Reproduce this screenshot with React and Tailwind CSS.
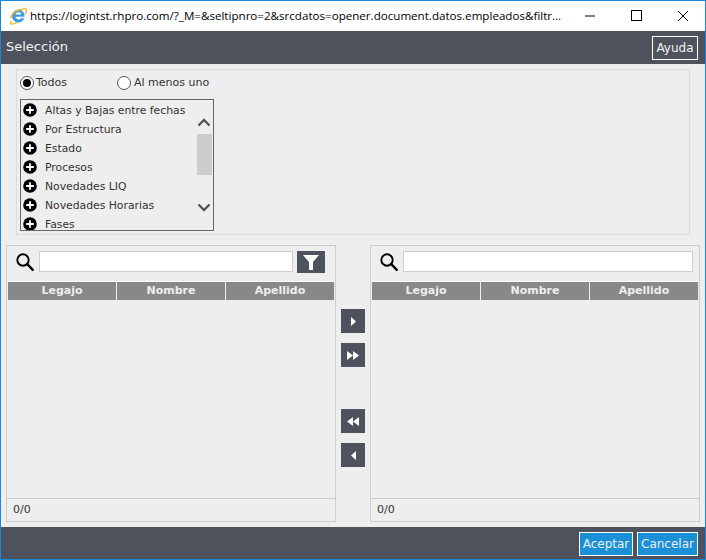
const FONT = "font-['DejaVu_Sans',sans-serif]";

const items = [
  "Altas y Bajas entre fechas",
  "Por Estructura",
  "Estado",
  "Procesos",
  "Novedades LIQ",
  "Novedades Horarias",
  "Fases",
];

const PlusIcon = () => (
  <svg width="14" height="14" viewBox="0 0 14 14" className="mb-[2px] shrink-0">
    <circle cx="7" cy="7" r="6.8" fill="#000" />
    <path d="M7 3.2v7.6M3.2 7h7.6" stroke="#fff" strokeWidth="1.8" />
  </svg>
);

const SearchIcon = () => (
  <svg width="20" height="20" viewBox="0 0 20 20" className="shrink-0">
    <circle cx="8" cy="8" r="5.7" fill="none" stroke="#000" strokeWidth="1.9" />
    <path d="M12.2 12.2l5.6 5.6" stroke="#000" strokeWidth="2.4" strokeLinecap="round" />
  </svg>
);

const IeLogo = () => (
  <svg width="18" height="18" viewBox="0 0 18 18" className="shrink-0">
    <path d="M9.4 2.6a6.4 6.4 0 1 0 6 8.6h-3.2a3.2 3.2 0 0 1-5.7-1.4h9.1A6.5 6.5 0 0 0 9.4 2.6zM6.6 7.5a3 3 0 0 1 5.8 0z" fill="#3a9ee0" />
    <path d="M2.4 14C-.5 18 4.5 18 8.5 15M13.5 2.2c4.5-2 4.6 1.4 2.8 4.6M1.2 11C3 6.5 8.5 2.2 13.5 2.2" fill="none" stroke="#eeb42a" strokeWidth="1.4" />
  </svg>
);

const Triangle = ({ dir, width }) => (
  <svg width={width} height="9" viewBox="0 0 6 9" preserveAspectRatio="none">
    <path d={dir === "right" ? "M0 0l6 4.5-6 4.5z" : "M6 0L0 4.5 6 9z"} fill="#fff" />
  </svg>
);

const ArrowButton = ({ dir, count, className = "" }) => (
  <button className={`flex h-6 w-6 items-center justify-center bg-[#4e525c] ${className}`}>
    {count === 2 && <Triangle dir={dir} width={6} />}
    <Triangle dir={dir} width={count === 2 ? 6 : 5} />
  </button>
);

const ListPanel = ({ withFilter }) => (
  <div className="flex w-[330px] flex-col border border-[#cdcdcd]">
    <div className={`flex h-[35px] items-center pb-[4px] pl-[8px] ${withFilter ? "pr-[10px]" : "pr-[6px]"}`}>
      <SearchIcon />
      <div className="ml-[4px] h-[21px] flex-1 border border-[#cdcdcd] bg-white" />
      {withFilter && (
        <button className="ml-[4px] mt-[1px] flex h-[22px] w-[28px] items-center justify-center bg-[#4e525c]">
          <svg width="16" height="15" viewBox="0 0 16 15">
            <path d="M0 0h16l-6 7v8H6V7z" fill="#fff" />
          </svg>
        </button>
      )}
    </div>
    <div className="mx-[1px] grid h-[19px] grid-cols-3 gap-px border-y border-white">
      {["Legajo", "Nombre", "Apellido"].map((h) => (
        <div key={h} className="flex items-center justify-center bg-[#888] pt-[1px] text-[11px] font-bold text-[#eee]">
          {h}
        </div>
      ))}
    </div>
    <div className="flex-1" />
    <div className="flex h-[23px] items-center border-t border-[#cdcdcd] pl-[6px] pt-[1px] text-[11px] text-[#333]">0/0</div>
  </div>
);

export default function App() {
  return (
    <div className={`flex h-[560px] w-[706px] flex-col overflow-hidden border border-[#1a86d9] bg-[#eee] ${FONT}`}>
      {/* barra de la ventana */}
      <div className="flex h-[30px] items-center bg-white pl-[8px] font-['Open_Sans',sans-serif] text-[11.6px] text-black">
        <IeLogo />
        <span className="ml-[3px] w-[535px] whitespace-nowrap">
          https://logintst.rhpro.com/?_M=&seltipnro=2&srcdatos=opener.document.datos.empleados&filtr...
        </span>
        <div className="ml-auto flex items-center">
          <svg width="12" height="12" viewBox="0 0 12 12" className="mr-[35px]">
            <path d="M1 6h10" stroke="#000" />
          </svg>
          <svg width="12" height="12" viewBox="0 0 12 12" className="mr-[34px]">
            <rect x=".5" y=".5" width="10" height="10" fill="none" stroke="#000" />
          </svg>
          <svg width="12" height="12" viewBox="0 0 12 12" className="mr-[16px]">
            <path d="M1 1l10 10M11 1L1 11" stroke="#000" />
          </svg>
        </div>
      </div>

      <div className="flex h-[33px] items-center justify-between bg-[#4e525c] pl-[5px] pr-[7px] text-[#f2f2f2]">
        <span className="pb-[2px] text-[13px]">Selección</span>
        <button className="mt-[1px] h-[24px] w-[46px] border border-white text-[12px]">Ayuda</button>
      </div>

      <div className="flex flex-1 flex-col px-[5px]">
        <div className="ml-[10px] mt-[5px] h-[166px] w-[674px] border border-[#dcdcdc] pl-[3px] pt-[4px]">
          <div className="flex h-[17px] items-center text-[11px] text-[#333]">
            <span className="flex h-[14px] w-[14px] items-center justify-center rounded-full border border-[#555] bg-white">
              <span className="h-[8px] w-[8px] rounded-full bg-black" />
            </span>
            <span className="ml-[2px] w-[81px] pt-[1px]">Todos</span>
            <span className="h-[14px] w-[14px] rounded-full border border-[#555] bg-white" />
            <span className="ml-[3px] pt-[1px]">Al menos uno</span>
          </div>
          <div className="mt-[8px] flex h-[132px] w-[194px] overflow-hidden border border-[#666]">
            <div className="flex-1 pl-[2px] pt-[1px]">
              {items.map((item) => (
                <div key={item} className="flex h-[19px] items-center text-[10.8px] text-[#333]">
                  <PlusIcon />
                  <span className="ml-[8px] whitespace-nowrap pt-[2px]">{item}</span>
                </div>
              ))}
            </div>
            <div className="mr-[1px] flex w-[16px] flex-col items-center">
              <svg width="14" height="9" viewBox="0 0 14 9" className="mt-[18px]">
                <path d="M1.5 7.5L7 2l5.5 5.5" fill="none" stroke="#555" strokeWidth="2.4" />
              </svg>
              <div className="mt-[7px] h-[41px] w-[15px] bg-[#cdcdcd]" />
              <svg width="14" height="9" viewBox="0 0 14 9" className="mt-[28px]">
                <path d="M1.5 1.5L7 7l5.5-5.5" fill="none" stroke="#555" strokeWidth="2.4" />
              </svg>
            </div>
          </div>
        </div>

        <div className="mt-[10px] flex h-[277px]">
          <ListPanel withFilter />
          <div className="flex w-[34px] flex-col items-center pt-[64px]">
            <ArrowButton dir="right" count={1} />
            <ArrowButton dir="right" count={2} className="mt-[10px]" />
            <ArrowButton dir="left" count={2} className="mt-[42px]" />
            <ArrowButton dir="left" count={1} className="mt-[10px]" />
          </div>
          <ListPanel />
        </div>
      </div>

      <div className="flex h-[32px] items-center justify-end gap-[4px] bg-[#4e525c] pr-[7px] pt-[2px]">
        <button className="h-[24px] w-[54px] border border-white bg-[#1a8fd6] text-[12px] text-[#eee]">Aceptar</button>
        <button className="h-[24px] w-[61px] border border-white bg-[#1a8fd6] text-[12px] text-[#eee]">Cancelar</button>
      </div>
    </div>
  );
}
